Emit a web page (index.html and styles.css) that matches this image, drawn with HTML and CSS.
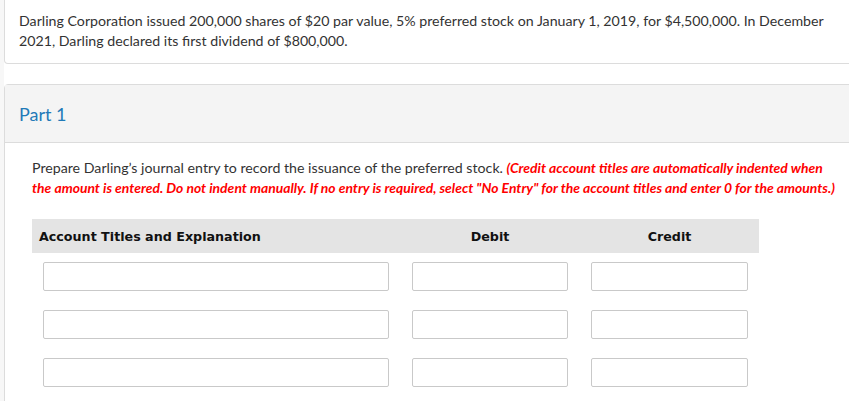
FILE: index.html
```html
<!DOCTYPE html>
<html lang="en">
<head>
<meta charset="utf-8">
<title>Darling Corporation</title>
<link rel="stylesheet" href="styles.css">
</head>
<body>
<div class="main">
  <div class="card intro">
    <p>Darling Corporation issued 200,000 shares of $20 par value, 5% preferred stock on January 1, 2019, for $4,500,000. In December 2021, Darling declared its first dividend of $800,000.</p>
  </div>

  <div class="card part">
    <div class="part-head">Part 1</div>
    <div class="part-body">
      <p class="prompt">Prepare Darling’s journal entry to record the issuance of the preferred stock. <em class="note">(Credit account titles are automatically indented when the amount is entered. Do not indent manually. If no entry is required, select "No Entry" for the account titles and enter 0 for the amounts.)</em></p>

      <div class="journal">
        <div class="jhead">
          <div class="th th-account">Account Titles and Explanation</div>
          <div class="th th-num">Debit</div>
          <div class="th th-num">Credit</div>
        </div>
        <div class="jrow">
          <div class="cell"><input class="field" type="text"></div>
          <div class="cell"><input class="field" type="text"></div>
          <div class="cell"><input class="field" type="text"></div>
        </div>
        <div class="jrow">
          <div class="cell"><input class="field" type="text"></div>
          <div class="cell"><input class="field" type="text"></div>
          <div class="cell"><input class="field" type="text"></div>
        </div>
        <div class="jrow">
          <div class="cell"><input class="field" type="text"></div>
          <div class="cell"><input class="field" type="text"></div>
          <div class="cell"><input class="field" type="text"></div>
        </div>
      </div>
    </div>
  </div>
</div>
</body>
</html>
```

FILE: styles.css
```css
html, body {
  margin: 0;
  padding: 0;
}

body {
  background: #f7f7f7;
  font-family: Lato, "Noto Sans", sans-serif;
  color: #333;
  overflow: hidden;
  width: 849px;
  height: 401px;
}

.main {
  margin-left: 4px;
  width: 870px;
  background: #fff;
  min-height: 420px;
  display: flex;
  flex-direction: column;
  gap: 20px;
}

.card {
  background: #fff;
  border: 1px solid #dcdcdc;
  border-radius: 4px;
}

.intro {
  border-top: none;
  border-radius: 0 0 4px 4px;
  padding: 11px 14px 12px;
}

.intro p {
  margin: 0;
  font-size: 14.2px;
  line-height: 20px;
  width: 820px;
}

.part-head {
  background: #f4f4f4;
  border-bottom: 1px solid #dcdcdc;
  height: 58px;
  box-sizing: border-box;
  padding-left: 14px;
  display: flex;
  align-items: center;
  font-size: 18px;
  color: #1f7ab8;
}

.part-body {
  padding: 15px 27px 40px;
}

.prompt {
  margin: 0;
  font-size: 14.2px;
  line-height: 19.5px;
  width: 812px;
}

.note {
  color: #ff0000;
  font-weight: bold;
  font-style: italic;
  font-size: 13.9px;
}

.journal {
  margin-top: 22px;
  width: 727px;
}

.jhead {
  display: grid;
  grid-template-columns: 368px 180px 179px;
  background: #e4e4e4;
  height: 34px;
  align-items: center;
}

.th {
  font-family: "DejaVu Sans", Verdana, sans-serif;
  font-weight: bold;
  font-size: 12.7px;
  color: #111;
}

.th-account {
  padding-left: 7px;
}

.th-num {
  text-align: center;
}

.jrow {
  display: grid;
  grid-template-columns: 368px 180px 179px;
  margin-top: 9px;
}

.jrow + .jrow {
  margin-top: 19px;
}

.cell {
  padding: 0 11px 0 11px;
}

.cell:nth-child(2) {
  padding: 0 12px;
}

.field {
  display: block;
  box-sizing: border-box;
  width: 100%;
  height: 29px;
  margin: 0;
  border: 1px solid #c9c9c9;
  border-radius: 2px;
  background: #fff;
  padding: 0 6px;
  font-family: Lato, sans-serif;
  font-size: 14px;
}
```
